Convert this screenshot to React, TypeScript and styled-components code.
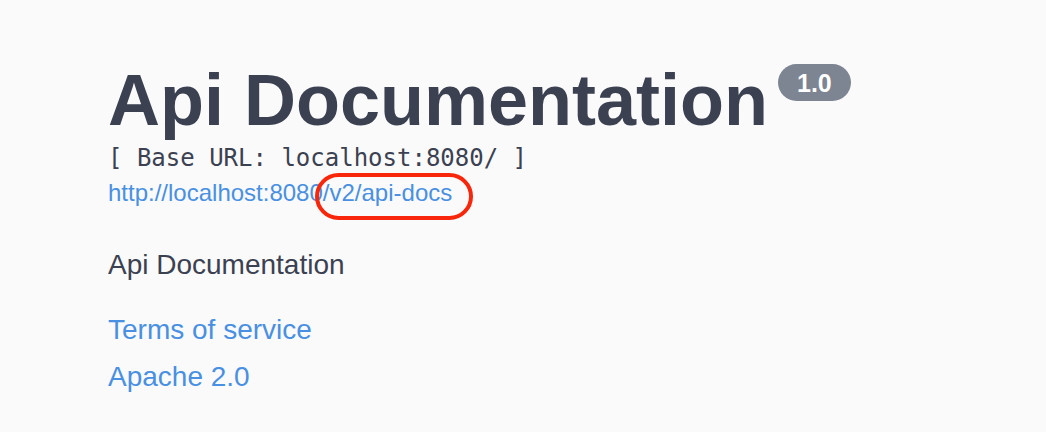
import React from "react";
import styled, { createGlobalStyle } from "styled-components";

const GlobalStyle = createGlobalStyle`
  html, body {
    margin: 0;
    padding: 0;
    background-color: #fafafa;
  }
`;

const Page = styled.div`
  width: 100%;
  min-height: 432px;
  background-color: #fafafa;
  padding: 59px 0 0 108px;
  box-sizing: border-box;
  font-family: "Liberation Sans", Arial, sans-serif;
  color: #3b4151;
`;

const TitleRow = styled.div`
  display: flex;
  align-items: flex-start;
`;

const Title = styled.h2`
  margin: 0;
  font-size: 72px;
  line-height: 82px;
  font-weight: 700;
  color: #3b4151;
`;

const Version = styled.small`
  margin: 5px 0 0 10px;
  padding: 5px 19px 3px;
  border-radius: 57px;
  background-color: #7d8492;
  color: #ffffff;
  font-size: 25px;
  line-height: 29px;
  font-weight: 700;
`;

const BaseUrl = styled.pre`
  margin: 3px 0 0;
  font-family: "DejaVu Sans Mono", "Liberation Mono", monospace;
  font-size: 24px;
  line-height: 28px;
  color: #3b4151;
`;

const Link = styled.a<{ $size?: number; $gap?: number }>`
  display: block;
  margin-top: ${(p) => p.$gap ?? 0}px;
  font-size: ${(p) => p.$size ?? 24}px;
  line-height: ${(p) => (p.$size ?? 24) + 4}px;
  color: #4990e2;
  text-decoration: none;
`;

const Marked = styled.span`
  position: relative;
  display: inline-block;
`;

// red hand-drawn style annotation around the docs path
const Circle = styled.span`
  position: absolute;
  top: -6px;
  left: -8px;
  right: -21px;
  bottom: -13px;
  border: 4px solid #f8260a;
  border-radius: 24px;
  pointer-events: none;
`;

const Description = styled.p`
  margin: 42px 0 0;
  font-size: 28px;
  line-height: 32px;
  color: #3b4151;
`;

const App: React.FunctionComponent = () => (
  <>
    <GlobalStyle />
    <Page>
      <TitleRow>
        <Title>Api Documentation</Title>
        <Version>1.0</Version>
      </TitleRow>
      <BaseUrl>[ Base URL: localhost:8080/ ]</BaseUrl>
      <Link href="#" $gap={7}>
        http://localhost:8080
        <Marked>
          /v2/api-docs
          <Circle />
        </Marked>
      </Link>
      <Description>Api Documentation</Description>
      <Link href="#" $size={28} $gap={33}>
        Terms of service
      </Link>
      <Link href="#" $size={28} $gap={15}>
        Apache 2.0
      </Link>
    </Page>
  </>
);

export default App;
